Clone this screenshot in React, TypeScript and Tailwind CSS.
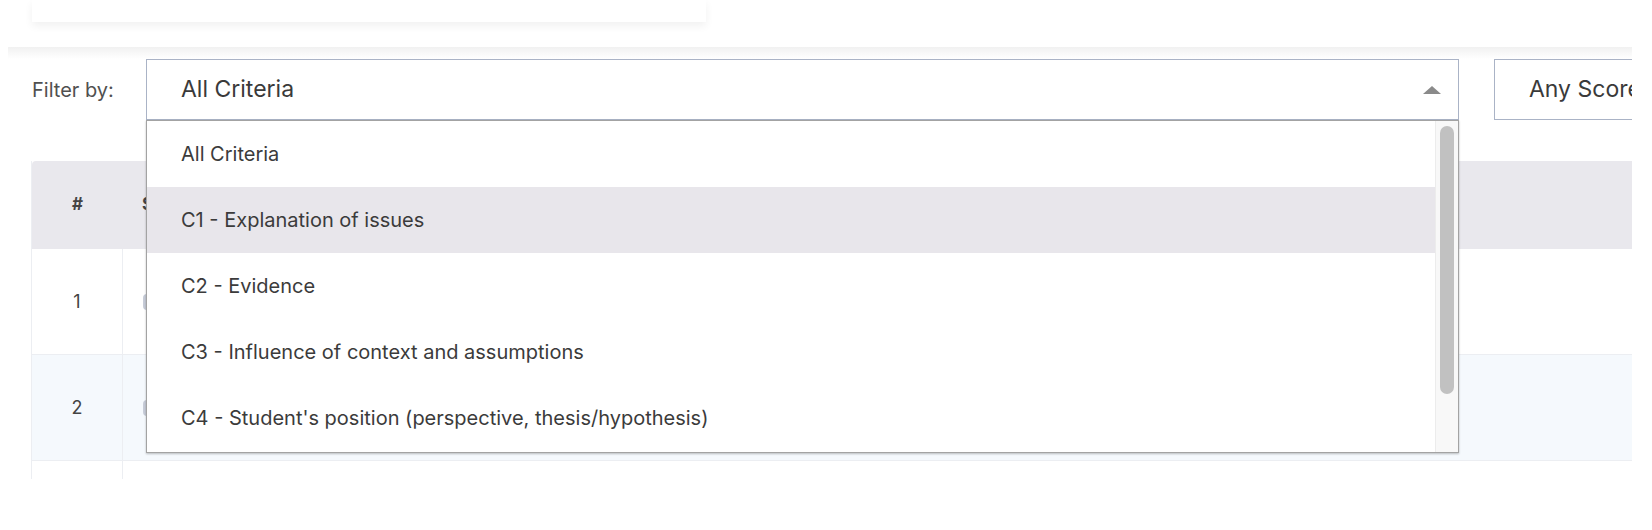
import React from "react";

const criteria = [
  "All Criteria",
  "C1 - Explanation of issues",
  "C2 - Evidence",
  "C3 - Influence of context and assumptions",
  "C4 - Student's position (perspective, thesis/hypothesis)",
];

function CriteriaSelect() {
  return (
    <div className="relative shrink-0 w-[1313px] h-[61px]">
      <div className="flex items-center justify-between h-full border border-[#aab3c6] bg-white pl-[34px] pr-[16px]">
        <span className="text-[23px] text-[#3a3a3a]">All Criteria</span>
        <svg width="20" height="10" viewBox="0 0 20 10">
          <path d="M10 1 L19 9 L1 9 Z" fill="#8a8a8a" />
        </svg>
      </div>
      <div className="absolute left-0 top-[61px] z-10 flex w-[1313px] h-[333px] border border-[#a3a3a3] bg-white shadow-[0_1px_2px_rgba(0,0,0,0.25)]">
        <ul className="flex-1">
          {criteria.map((c, i) => (
            <li
              key={c}
              className={`flex items-center h-[66px] pl-[34px] text-[20px] text-[#3b3b3b] ${
                i === 1 ? "bg-[#e8e6eb]" : "bg-white"
              }`}
            >
              {c}
            </li>
          ))}
        </ul>
        <div className="w-[23px] bg-[#f8f8f8] border-l border-[#ececec] pt-[5px] pl-[4px]">
          <div className="w-[14px] h-[268px] rounded-full bg-[#c1c1c1]" />
        </div>
      </div>
    </div>
  );
}

function Row({ n, shade }: { n?: number; shade?: boolean }) {
  return (
    <div
      className={`flex h-[106px] border-b border-[#eceef2] ${shade ? "bg-[#f5f9fd]" : "bg-white"}`}
    >
      <div className="w-[91px] shrink-0 flex items-center justify-center border-r border-[#eceef2] text-[18px] text-[#444]">
        {n}
      </div>
      <div className="flex items-center pl-[20px]">
        <div className="w-[40px] h-[16px] rounded-[4px] bg-[#c7ccd8]" />
      </div>
    </div>
  );
}

export default function App() {
  return (
    <div className="w-[1652px] h-[530px] bg-white font-['Inter',sans-serif]">
      <div className="w-[1632px] h-[479px] overflow-hidden">
        <div className="ml-[32px] w-[674px] h-[22px] bg-white shadow-[0_4px_8px_rgba(0,0,0,0.06)]" />
        <div className="mt-[25px] ml-[8px] bg-white">
          <div className="h-[12px] bg-gradient-to-b from-[#f1f1f1] to-white" />
          <div className="flex items-center h-[61px] pl-[24px]">
            <span className="shrink-0 w-[114px] text-[20px] text-[#505050]">Filter by:</span>
            <CriteriaSelect />
            <div className="shrink-0 ml-[35px] w-[220px] h-[61px] flex items-center pl-[34px] border border-[#aab3c6] text-[23px] text-[#3a3a3a] whitespace-nowrap">
              Any Score
            </div>
          </div>
          <div className="mt-[41px] ml-[23px] border-l border-[#eceef2]">
            <div className="flex h-[88px] bg-[#e9e8ed] rounded-tl-[4px]">
              <div className="w-[91px] shrink-0 flex items-center justify-center font-bold text-[17px] text-[#444]">
                #
              </div>
              <div className="flex items-center pl-[19px] font-bold text-[17px] text-[#444]">
                Student
              </div>
            </div>
            <Row n={1} />
            <Row n={2} shade />
            <Row />
          </div>
        </div>
      </div>
    </div>
  );
}
